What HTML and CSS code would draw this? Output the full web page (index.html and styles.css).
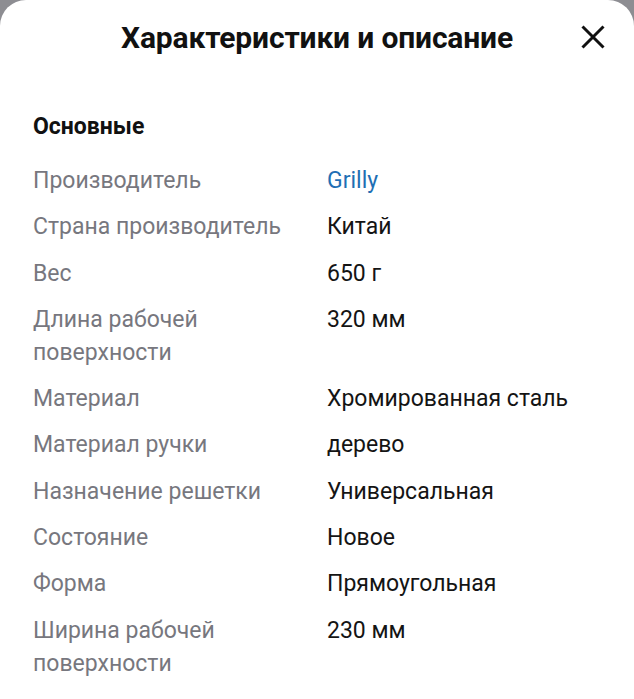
FILE: index.html
```html
<!DOCTYPE html>
<html lang="ru">
<head>
<meta charset="utf-8">
<link rel="stylesheet" href="styles.css">
</head>
<body>
<div class="sheet">
  <header class="head">
    <h1 class="title">Характеристики и описание</h1>
    <button class="close" aria-label="Закрыть">
      <svg width="24" height="24" viewBox="0 0 24 24"><path d="M1.5 1.5 L22.5 22.5 M22.5 1.5 L1.5 22.5" stroke="#111" stroke-width="3"/></svg>
    </button>
  </header>
  <section class="group">
    <h2 class="group-title">Основные</h2>
    <dl class="specs">
      <div class="row"><dt>Производитель</dt><dd class="link">Grilly</dd></div>
      <div class="row"><dt>Страна производитель</dt><dd>Китай</dd></div>
      <div class="row"><dt>Вес</dt><dd>650 г</dd></div>
      <div class="row"><dt>Длина рабочей поверхности</dt><dd>320 мм</dd></div>
      <div class="row"><dt>Материал</dt><dd>Хромированная сталь</dd></div>
      <div class="row"><dt>Материал ручки</dt><dd>дерево</dd></div>
      <div class="row"><dt>Назначение решетки</dt><dd>Универсальная</dd></div>
      <div class="row"><dt>Состояние</dt><dd>Новое</dd></div>
      <div class="row"><dt>Форма</dt><dd>Прямоугольная</dd></div>
      <div class="row"><dt>Ширина рабочей поверхности</dt><dd>230 мм</dd></div>
    </dl>
  </section>
</div>
</body>
</html>
```
FILE: styles.css
```css
html, body {
  margin: 0;
  padding: 0;
}
body {
  background: #8d8d92;
  font-family: Roboto, "Noto Sans", sans-serif;
  height: 699px;
  overflow: hidden;
}
.sheet {
  background: #fff;
  border-radius: 26px 26px 0 0;
  height: 699px;
  box-sizing: border-box;
  padding: 0 0 0 33px;
}
.head {
  display: flex;
  align-items: center;
  height: 74px;
}
.title {
  margin: 0;
  flex: 1;
  text-align: center;
  font-size: 30px;
  font-weight: 700;
  color: #111;
  padding-left: 30px;
  letter-spacing: -0.15px;
}
.close {
  background: none;
  border: 0;
  padding: 0;
  width: 24px;
  height: 24px;
  margin-right: 29px;
  margin-left: 10px;
  display: flex;
}
.group {
  padding-top: 37px;
}
.group-title {
  margin: 0 0 21px;
  font-size: 23px;
  font-weight: 700;
  color: #111;
  line-height: 32px;
}
.specs {
  margin: 0;
  display: flex;
  flex-direction: column;
  gap: 13.3px;
}
.row {
  display: grid;
  grid-template-columns: 294px 1fr;
  font-size: 23px;
  line-height: 33px;
}
.row dt {
  color: #77777e;
  padding-right: 20px;
}
.row dd {
  margin: 0;
  color: #141414;
}
.row dd.link {
  color: #1f6fb4;
}
```
